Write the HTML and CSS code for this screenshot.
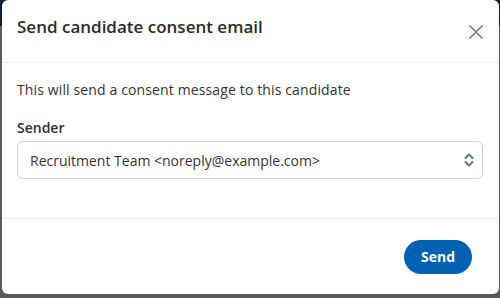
FILE: index.html
```html
<!DOCTYPE html>
<html lang="en">
<head>
<meta charset="utf-8">
<title>Send candidate consent email</title>
<link rel="stylesheet" href="styles.css">
</head>
<body>
<div class="modal" role="dialog" aria-labelledby="title">
  <header class="modal-header">
    <h2 id="title" class="modal-title">Send candidate consent email</h2>
    <button class="close" aria-label="Close">
      <svg width="16" height="16" viewBox="0 0 16 16"><path d="M1.5 1.5 L14.5 14.5 M14.5 1.5 L1.5 14.5" stroke="#7a7a7a" stroke-width="1.6" fill="none"/></svg>
    </button>
  </header>
  <div class="modal-body">
    <p class="intro">This will send a consent message to this candidate</p>
    <label class="label" for="sender">Sender</label>
    <div class="select">
      <span class="select-value">Recruitment Team &lt;noreply@example.com&gt;</span>
      <svg class="chev" width="10" height="16" viewBox="0 0 10 16"><path d="M1.5 6 L5 2.5 L8.5 6 M1.5 10 L5 13.5 L8.5 10" stroke="#5b7593" stroke-width="2" fill="none" stroke-linecap="round" stroke-linejoin="round"/></svg>
    </div>
  </div>
  <footer class="modal-footer">
    <button class="btn-send">Send</button>
  </footer>
</div>
</body>
</html>
```
FILE: styles.css
```css
html, body { margin: 0; padding: 0; }
body {
  width: 500px;
  height: 298px;
  overflow: hidden;
  background: linear-gradient(to bottom, #0b2035 0, #0b2035 26px, #5a5a5a 26px, #5a5a5a 100%);
  font-family: "Open Sans", "Liberation Sans", sans-serif;
  color: #333;
}
.modal {
  margin-left: 2px;
  width: 497px;
  height: 294px;
  background: #fff;
  border-radius: 6px;
  display: flex;
  flex-direction: column;
  overflow: hidden;
}
.modal-header {
  height: 62px;
  border-bottom: 1px solid #ededed;
  display: flex;
  align-items: center;
  justify-content: space-between;
  padding: 0 15px 0 15px;
  box-sizing: content-box;
}
.modal-title {
  margin: 0;
  font-size: 17px;
  font-weight: 600;
  color: #2b2b2b;
  line-height: 24px;
  padding-bottom: 9px;
}
.close {
  border: 0;
  background: none;
  padding: 0;
  width: 16px;
  height: 16px;
  margin-top: 2px;
  display: flex;
}
.modal-body {
  height: 156px;
  padding: 17px 16px 0 15px;
  box-sizing: border-box;
  border-bottom: 1px solid #ededed;
}
.intro {
  margin: 0;
  font-size: 14px;
  line-height: 20px;
  letter-spacing: 0.13px;
}
.label {
  display: block;
  margin-top: 18px;
  font-size: 14px;
  font-weight: 600;
  line-height: 20px;
  color: #2f2f2f;
}
.select {
  margin-top: 3px;
  height: 38px;
  box-sizing: border-box;
  border: 1px solid #cfd2da;
  border-radius: 6px;
  display: flex;
  align-items: center;
  justify-content: space-between;
  padding: 0 8px 0 12px;
}
.select-value {
  font-size: 14px;
  color: #333;
}
.modal-footer {
  flex: 1;
  display: flex;
  align-items: center;
  justify-content: flex-end;
  padding-right: 27px;
}
.btn-send {
  width: 68px;
  height: 34px;
  border: 0;
  border-radius: 17px;
  background: #0062b0;
  color: #fff;
  font-family: "Open Sans", "Liberation Sans", sans-serif;
  font-size: 14px;
  font-weight: 700;
  padding: 0;
}
```
